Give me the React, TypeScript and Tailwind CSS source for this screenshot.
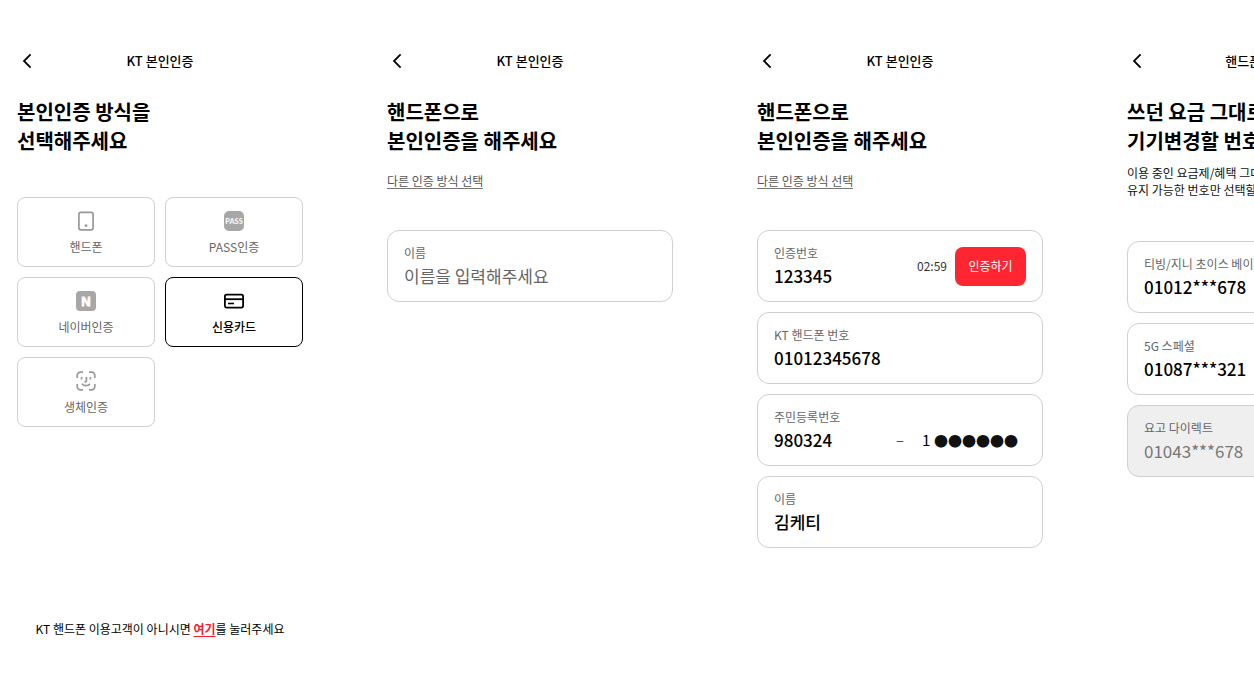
import React, { useState } from 'react'
import { clsx } from 'clsx'

interface ScreenProps {
  header: string
  title: string[]
  children: React.ReactNode
}

interface FieldProps {
  id: string
  label: string
  value: string
  placeholder?: string
  onChange: (value: string) => void
  children?: React.ReactNode
}

const PhoneIcon = () => (
  <svg viewBox="0 0 20 20" className="h-5 w-5" fill="none" aria-hidden="true">
    <rect x="2.9" y="1.4" width="14.2" height="17.4" rx="2" stroke="#999" strokeWidth="1.7" />
    <circle cx="10" cy="14.6" r="1.4" fill="#999" />
  </svg>
)

const PassIcon = () => (
  <svg viewBox="0 0 20 20" className="h-5 w-5" aria-hidden="true">
    <rect width="20" height="20" rx="5" fill="#a7a7a7" />
    <text
      x="10"
      y="12.8"
      textAnchor="middle"
      fill="#fff"
      fontSize="7.4"
      fontWeight="700"
      fontFamily="Lato, sans-serif"
    >
      PASS
    </text>
  </svg>
)

const NaverIcon = () => (
  <svg viewBox="0 0 20 20" className="h-5 w-5" aria-hidden="true">
    <rect width="20" height="20" rx="4" fill="#a7a7a7" />
    <text
      x="10"
      y="14.6"
      textAnchor="middle"
      fill="#fff"
      stroke="#fff"
      strokeWidth="0.8"
      fontSize="13"
      fontWeight="700"
      fontFamily="'Liberation Sans', sans-serif"
    >
      N
    </text>
  </svg>
)

const CardIcon = () => (
  <svg viewBox="0 0 20 20" className="h-5 w-5" fill="none" stroke="currentColor" aria-hidden="true">
    <rect x="0.9" y="3.6" width="18.2" height="13" rx="1.8" strokeWidth="1.8" />
    <path d="M1 8.2h18" strokeWidth="1.8" />
    <path d="M4 12.5h6" strokeWidth="1.6" />
  </svg>
)

const FaceIcon = () => (
  <svg
    viewBox="0 0 20 20"
    className="h-5 w-5"
    fill="none"
    stroke="#999"
    strokeWidth="1.7"
    aria-hidden="true"
  >
    <path d="M1.2 7V4.5a3.3 3.3 0 0 1 3.3-3.3H7" />
    <path d="M13 1.2h2.5a3.3 3.3 0 0 1 3.3 3.3V7" />
    <path d="M18.8 13v2.5a3.3 3.3 0 0 1-3.3 3.3H13" />
    <path d="M7 18.8H4.5a3.3 3.3 0 0 1-3.3-3.3V13" />
    <path d="M5.6 6v2.6M14.4 6v2.6M10.4 6v3.8c0 .6-.4 1-1 1h-.9" />
    <path d="M6 12.8c1 1.200 2.400 1.900 4 1.900s3-.700 4-1.900" />
  </svg>
)

const METHODS = [
  { id: 'phone', label: '핸드폰', icon: <PhoneIcon /> },
  { id: 'pass', label: 'PASS인증', icon: <PassIcon /> },
  { id: 'naver', label: '네이버인증', icon: <NaverIcon /> },
  { id: 'card', label: '신용카드', icon: <CardIcon /> },
  { id: 'face', label: '생체인증', icon: <FaceIcon /> },
]

const NUMBERS = [
  { plan: '티빙/지니 초이스 베이직', number: '01012***678', disabled: false },
  { plan: '5G 스페셜', number: '01087***321', disabled: false },
  { plan: '요고 다이렉트', number: '01043***678', disabled: true },
]

const Screen: React.FC<ScreenProps> = ({ header, title, children }) => (
  <section className="flex w-80 shrink-0 flex-col px-[17px] pt-12 pb-14">
    <header className="grid h-[25px] grid-cols-[20px_1fr_20px] items-center">
      <button type="button" aria-label="뒤로" className="flex cursor-pointer justify-center">
        <svg viewBox="0 0 20 20" className="h-5 w-5" fill="none" stroke="#000" strokeWidth="1.8">
          <path d="M13.6 3.4 7 10l6.600 6.600" />
        </svg>
      </button>
      <span className="text-center text-[13px] font-medium">{header}</span>
    </header>
    <h2 className="mt-6 text-[20px] leading-[29px] font-bold">
      {title.map((line) => (
        <span key={line} className="block whitespace-nowrap">
          {line}
        </span>
      ))}
    </h2>
    {children}
  </section>
)

const Field: React.FC<FieldProps> = ({ id, label, value, placeholder, onChange, children }) => (
  <div className="flex h-18 items-center rounded-xl border border-[#d0d0d0] px-4">
    <div className="min-w-0 flex-1">
      <label htmlFor={id} className="block text-[12px] leading-[18px] text-[#666]">
        {label}
      </label>
      <input
        id={id}
        type="text"
        value={value}
        placeholder={placeholder}
        onChange={(e) => onChange(e.target.value)}
        className="mt-0.5 block h-6 w-full text-[17px] leading-6 font-medium placeholder:font-normal placeholder:text-[#666] focus:outline-none"
      />
    </div>
    {children}
  </div>
)

const OtherMethodLink = () => (
  <a
    href="#methods"
    className="mt-[18px] self-start border-b border-[#777] text-[12px] leading-[15px] text-[#555]"
  >
    다른 인증 방식 선택
  </a>
)

export default function App() {
  const [method, setMethod] = useState('card')
  const [name, setName] = useState('')
  const [form, setForm] = useState({
    code: '123345',
    phone: '01012345678',
    birth: '980324',
    gender: '1',
    owner: '김케티',
  })

  const update = (key: keyof typeof form) => (value: string) =>
    setForm((prev) => ({ ...prev, [key]: value }))

  return (
    <main className="flex min-h-screen gap-[50px] overflow-hidden bg-white font-['Noto_Sans_CJK_KR',sans-serif] text-black">
      {/* Method selection */}
      <Screen header="KT 본인인증" title={['본인인증 방식을', '선택해주세요']}>
        <div id="methods" className="mt-[42px] grid grid-cols-2 gap-2.5">
          {METHODS.map(({ id, label, icon }) => (
            <button
              key={id}
              type="button"
              aria-pressed={method === id}
              onClick={() => setMethod(id)}
              className={clsx(
                'flex h-[70px] cursor-pointer flex-col items-center gap-2 rounded-lg border pt-[13px] text-[12px] leading-4',
                method === id
                  ? 'border-black font-medium text-black'
                  : 'border-[#d0d0d0] text-[#666]',
              )}
            >
              {icon}
              <span>{label}</span>
            </button>
          ))}
        </div>
        <p className="mt-auto text-center text-[12px] leading-[18px] whitespace-nowrap">
          KT 핸드폰 이용고객이 아니시면{' '}
          <a href="#join" className="font-bold text-[#fb1a2b] underline underline-offset-2">
            여기
          </a>
          를 눌러주세요
        </p>
      </Screen>

      {/* Name entry */}
      <Screen header="KT 본인인증" title={['핸드폰으로', '본인인증을 해주세요']}>
        <OtherMethodLink />
        <form className="mt-[41px]">
          <Field
            id="name"
            label="이름"
            value={name}
            placeholder="이름을 입력해주세요"
            onChange={setName}
          />
        </form>
      </Screen>

      {/* Completed form */}
      <Screen header="KT 본인인증" title={['핸드폰으로', '본인인증을 해주세요']}>
        <OtherMethodLink />
        <form className="mt-[41px] flex flex-col gap-2.5">
          <Field id="code" label="인증번호" value={form.code} onChange={update('code')}>
            <span className="mr-2 text-[12px] text-[#333]">02:59</span>
            <button
              type="button"
              className="h-[39px] w-[71px] cursor-pointer rounded-lg bg-[#ff2632] text-[12px] text-white"
            >
              인증하기
            </button>
          </Field>
          <Field id="phone" label="KT 핸드폰 번호" value={form.phone} onChange={update('phone')} />
          <Field id="birth" label="주민등록번호" value={form.birth} onChange={update('birth')}>
            <div className="mt-5 flex h-6 items-center">
              <span className="mr-[18px] text-[15px] font-light">–</span>
              <input
                type="text"
                aria-label="주민등록번호 뒷자리 첫 숫자"
                maxLength={1}
                value={form.gender}
                onChange={(e) => update('gender')(e.target.value)}
                className="w-3 text-[15px] focus:outline-none"
              />
              <span className="mr-2 text-[14px] text-[#111]">●●●●●●</span>
            </div>
          </Field>
          <Field id="owner" label="이름" value={form.owner} onChange={update('owner')} />
        </form>
      </Screen>

      {/* Number selection */}
      <Screen header="핸드폰 번호 선택" title={['쓰던 요금 그대로', '기기변경할 번호를 선택해주세요']}>
        <p className="mt-[9px] text-[12px] leading-[17px] whitespace-nowrap text-[#111]">
          이용 중인 요금제/혜택 그대로
          <br />
          유지 가능한 번호만 선택할 수 있어요
        </p>
        <div className="mt-[43px] flex flex-col gap-2.5">
          {NUMBERS.map(({ plan, number, disabled }) => (
            <button
              key={number}
              type="button"
              disabled={disabled}
              className="flex h-18 flex-col justify-center gap-0.5 rounded-xl border border-[#d0d0d0] px-4 text-left text-black enabled:cursor-pointer disabled:bg-[#efefef] disabled:text-[#777]"
            >
              <span className="text-[12px] leading-[18px] text-[#666]">{plan}</span>
              <span
                className={clsx('text-[17px] leading-6', disabled ? 'font-normal' : 'font-medium')}
              >
                {number}
              </span>
            </button>
          ))}
        </div>
      </Screen>
    </main>
  )
}
